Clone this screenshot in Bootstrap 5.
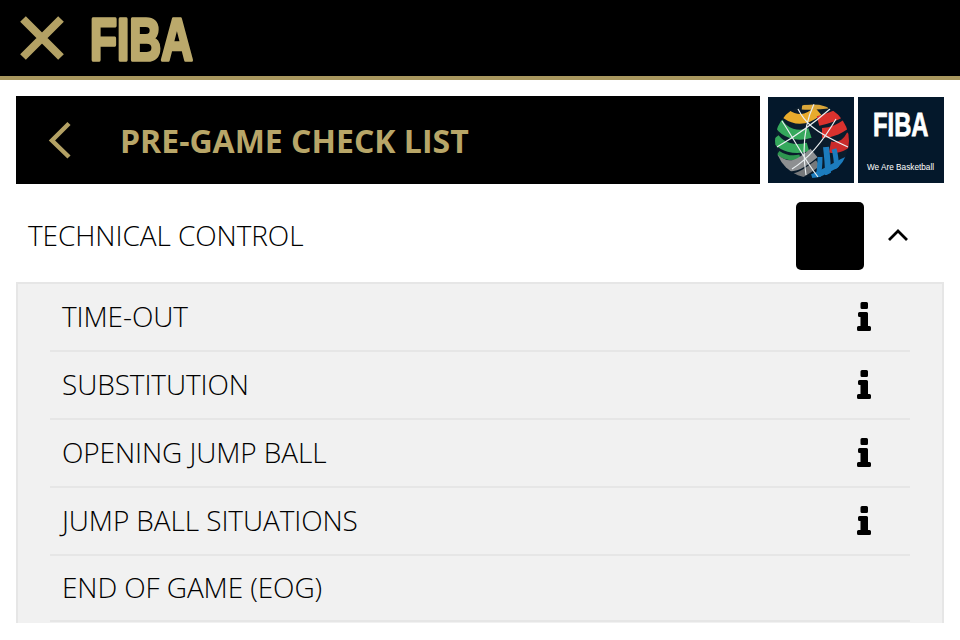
<!DOCTYPE html>
<html lang="en">
<head>
<meta charset="utf-8">
<title>Pre-game check list</title>
<link rel="stylesheet" href="https://cdn.jsdelivr.net/npm/bootstrap@5.3.0/dist/css/bootstrap.min.css">
<style>
body{background:#fff;font-family:"Open Sans",sans-serif;color:#000;overflow:hidden}
.top-head{height:80px;background:#000;border-bottom:4px solid #a8975e;padding-left:19px;gap:24px}
.brand-word{font-family:"Liberation Sans",sans-serif;font-weight:700;font-size:60px;fill:url(#goldFade);stroke:url(#goldFade);stroke-width:3.500;stroke-linejoin:round}
.page-wrap{padding:16px 16px 0}
.title-bar{height:88px;background:#000;width:744px}
.title-back{width:104px;padding-left:32px}
.title-text{font-size:32px;font-weight:700;color:#b8a668;line-height:1;padding-top:2px}
.logo-pair{gap:4px;padding-top:1px}
.logo-tile{width:86px;height:86px;background:#04182b;color:#fff}
.logo-word{font-family:"Liberation Sans",sans-serif;font-weight:700;font-size:34px;fill:#fff;stroke:#fff;stroke-width:.8}
.logo-tag{font-family:"Liberation Sans",sans-serif;font-size:9.800px;fill:#fff}
.section-row{height:98px;padding:6px 0 0 12px}
.section-name{font-size:28px;font-weight:300;line-height:1;letter-spacing:-.08px;padding-bottom:2px}
.status-box{width:68px;height:68px;background:#000;border-radius:5px;margin-left:auto;margin-right:22px}
.chev-slot{width:24px;margin-right:34px}
.item-panel{height:341px;overflow:hidden;background:#f1f1f1;border:2px solid #e6e6e6;border-bottom:0;padding:0 32px}
.check-item{height:68px;border-bottom:2px solid #e6e6e6;padding:0 39px 0 12px;font-size:28px;font-weight:300;line-height:1;letter-spacing:-.1px}
.check-item span{padding-bottom:2px}
.check-item:last-child{height:66px}
.check-item svg{flex:none;margin-bottom:2px}
</style>
</head>
<body>
<header class="top-head d-flex align-items-center">
  <svg width="46" height="46" viewBox="0 0 46 46" aria-hidden="true"><path d="M4 4 42 42M42 4 4 42" stroke="#b3a164" stroke-width="8" fill="none"/></svg>
  <svg width="160" height="76" viewBox="0 0 160 76" role="img" aria-label="FIBA"><defs><linearGradient id="goldFade" gradientUnits="userSpaceOnUse" x1="0" y1="13" x2="0" y2="63"><stop offset="0" stop-color="#bba96b"/><stop offset="1" stop-color="#a8975e"/></linearGradient></defs><text class="brand-word" transform="translate(1 60) scale(.735 1)">FIBA</text></svg>
</header>
<main class="page-wrap">
  <div class="d-flex justify-content-between">
    <div class="title-bar d-flex align-items-center">
      <div class="title-back"><svg width="24" height="40" viewBox="0 0 24 40" class="d-block" aria-hidden="true"><path d="M21 3.500 4 20.500 21 37" stroke="#b3a164" stroke-width="4.500" fill="none"/></svg></div>
      <span class="title-text">PRE-GAME CHECK LIST</span>
    </div>
    <div class="logo-pair d-flex">
      <div class="logo-tile">
        <svg width="86" height="86" viewBox="0 0 86 86" class="d-block" aria-hidden="true">
          <defs><clipPath id="globeClip"><circle cx="44" cy="44" r="37"/></clipPath></defs>
          <g clip-path="url(#globeClip)" fill="none">
            <circle cx="44" cy="44" r="37" fill="#0a1c2c"/>
            <path d="M18 17C28 24 38 24 50 14" stroke="#e8ab2c" stroke-width="10"/>
            <path d="M34 10C42 11 50 10 60 9" stroke="#d9a63a" stroke-width="5"/>
            <path d="M10 25C16 37 30 40 42 36" stroke="#35a85c" stroke-width="10"/>
            <path d="M7 41C14 50 26 54 40 50" stroke="#35a85c" stroke-width="9"/>
            <path d="M10 56C16 60 24 62 32 60" stroke="#2e9650" stroke-width="5"/>
            <path d="M50 24C58 22 66 20 72 16" stroke="#d9322e" stroke-width="10"/>
            <path d="M54 36C66 36 74 30 80 26" stroke="#d9322e" stroke-width="10"/>
            <path d="M62 50C72 52 80 46 84 38" stroke="#c92b2b" stroke-width="11"/>
            <path d="M6 62C22 76 34 66 46 56" stroke="#8d8f91" stroke-width="11"/>
            <path d="M22 80C32 80 42 72 50 66" stroke="#77797b" stroke-width="7"/>
            <path d="M50 80C52 72 52 66 52 60" stroke="#1c7cbd" stroke-width="5"/>
            <path d="M60 78C60 68 59 58 58 50" stroke="#1c7cbd" stroke-width="6"/>
            <path d="M69 72C68 64 68 58 66 52" stroke="#1c7cbd" stroke-width="5"/>
            <path d="M80 62C70 66 56 76 44 80" stroke="#1c7cbd" stroke-width="6"/>
            <path d="M30 12C36 24 44 34 80 50M14 24C26 42 36 62 50 80M9 50C26 40 46 26 62 12M24 72C40 62 54 46 68 22M46 7C36 28 34 52 38 78" stroke="#e9eef0" stroke-width="1.200"/>
          </g>
        </svg>
      </div>
      <div class="logo-tile">
        <svg width="86" height="86" viewBox="0 0 86 86" class="d-block" role="img" aria-label="FIBA We Are Basketball">
          <text class="logo-word" transform="translate(15 39) scale(.7 1)">FIBA</text>
          <text class="logo-tag" transform="translate(9 73) scale(.84 1)">We Are Basketball</text>
        </svg>
      </div>
    </div>
  </div>
  <div class="section-row d-flex align-items-center">
    <span class="section-name">TECHNICAL CONTROL</span>
    <div class="status-box"></div>
    <div class="chev-slot d-flex"><svg width="24" height="16" viewBox="0 0 24 16" aria-hidden="true"><path d="M3 12 12 3 21 12" stroke="#000" stroke-width="2.800" fill="none"/></svg></div>
  </div>
  <section class="item-panel">
    <div class="check-item d-flex align-items-center justify-content-between"><span>TIME-OUT</span><svg width="14" height="29" viewBox="0 0 14 29" aria-hidden="true"><use href="#infoGlyph"/></svg></div>
    <div class="check-item d-flex align-items-center justify-content-between"><span>SUBSTITUTION</span><svg width="14" height="29" viewBox="0 0 14 29" aria-hidden="true"><use href="#infoGlyph"/></svg></div>
    <div class="check-item d-flex align-items-center justify-content-between"><span>OPENING JUMP BALL</span><svg width="14" height="29" viewBox="0 0 14 29" aria-hidden="true"><use href="#infoGlyph"/></svg></div>
    <div class="check-item d-flex align-items-center justify-content-between"><span>JUMP BALL SITUATIONS</span><svg width="14" height="29" viewBox="0 0 14 29" aria-hidden="true"><use href="#infoGlyph"/></svg></div>
    <div class="check-item d-flex align-items-center justify-content-between"><span>END OF GAME (EOG)</span></div>
  </section>
</main>
<svg width="0" height="0" class="d-block" aria-hidden="true"><defs><path id="infoGlyph" d="M5 0H9.500Q11 0 11 1.500V5.500Q11 7 9.500 7H5Q3.500 7 3.500 5.500V1.500Q3.500 0 5 0ZM2.500 10H9.500Q11 10 11 11.500V24H12.500Q14 24 14 25.500V27.500Q14 29 12.500 29H1.500Q0 29 0 27.500V25.500Q0 24 1.500 24H3.500V15H2.500Q1 15 1 13.500V11.500Q1 10 2.500 10Z"/></defs></svg>
</body>
</html>
